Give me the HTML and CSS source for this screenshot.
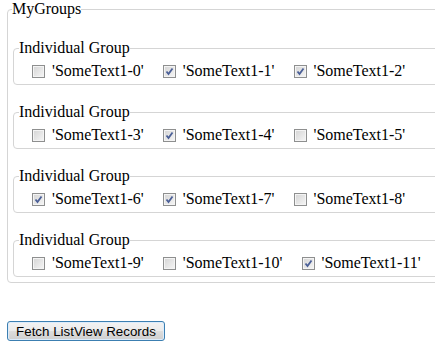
FILE: index.html
```html
<!DOCTYPE html>
<html lang="en">
<head>
    <meta charset="UTF-8">
    <meta name="viewport" content="width=device-width, initial-scale=1.0">
    <title>MyGroups</title>
    <link rel="stylesheet" href="styles.css">
</head>
<body>
<div class="page">
<fieldset class="groups">
    <legend>MyGroups</legend>

    <fieldset class="group">
        <legend>Individual Group</legend>
        <div class="row">
            <label class="item"><span class="box"></span>'SomeText1-0'</label>
            <label class="item"><span class="box checked"><svg viewBox="0 0 11 11"><path d="M2.5 5.5 L4.5 8 L8.5 2.5"/></svg></span>'SomeText1-1'</label>
            <label class="item"><span class="box checked"><svg viewBox="0 0 11 11"><path d="M2.5 5.5 L4.5 8 L8.5 2.5"/></svg></span>'SomeText1-2'</label>
        </div>
    </fieldset>

    <fieldset class="group">
        <legend>Individual Group</legend>
        <div class="row">
            <label class="item"><span class="box"></span>'SomeText1-3'</label>
            <label class="item"><span class="box checked"><svg viewBox="0 0 11 11"><path d="M2.5 5.5 L4.5 8 L8.5 2.5"/></svg></span>'SomeText1-4'</label>
            <label class="item"><span class="box"></span>'SomeText1-5'</label>
        </div>
    </fieldset>

    <fieldset class="group">
        <legend>Individual Group</legend>
        <div class="row">
            <label class="item"><span class="box checked"><svg viewBox="0 0 11 11"><path d="M2.5 5.5 L4.5 8 L8.5 2.5"/></svg></span>'SomeText1-6'</label>
            <label class="item"><span class="box checked"><svg viewBox="0 0 11 11"><path d="M2.5 5.5 L4.5 8 L8.5 2.5"/></svg></span>'SomeText1-7'</label>
            <label class="item"><span class="box"></span>'SomeText1-8'</label>
        </div>
    </fieldset>

    <fieldset class="group">
        <legend>Individual Group</legend>
        <div class="row">
            <label class="item"><span class="box"></span>'SomeText1-9'</label>
            <label class="item"><span class="box"></span>'SomeText1-10'</label>
            <label class="item"><span class="box checked"><svg viewBox="0 0 11 11"><path d="M2.5 5.5 L4.5 8 L8.5 2.5"/></svg></span>'SomeText1-11'</label>
        </div>
    </fieldset>
</fieldset>

<div class="actions">
    <button class="fetch-btn">Fetch ListView Records</button>
</div>
</div>
</body>
</html>
```

FILE: styles.css
```css
body {
    margin: 0;
    background-color: #ffffff;
    font-family: "Liberation Serif", "Times New Roman", serif;
    font-size: 16px;
    color: #000000;
}

.page {
    width: 435px;
    overflow: hidden;
}

fieldset {
    margin: 0;
    border: 1px solid #d5d5d5;
    border-radius: 4px;
}

legend {
    padding: 0;
    line-height: 18px;
}

.groups {
    width: 470px;
    margin-left: 7px;
    padding: 21px 0 5px 0;
}

.groups > legend {
    margin-left: 4px;
}

.group {
    margin: 0 0 18px 5px;
    padding: 0;
}

.group:last-child {
    margin-bottom: 0;
}

.group > legend {
    margin-left: 5px;
}

.row {
    display: flex;
    align-items: center;
    height: 20px;
    padding: 4px 0 3px 18px;
}

.item {
    display: flex;
    align-items: center;
    margin-right: 19px;
    white-space: nowrap;
}

.box {
    box-sizing: border-box;
    width: 13px;
    height: 13px;
    margin-right: 7px;
    border: 1px solid #8e8f8f;
    background: linear-gradient(135deg, #d4d4d4, #f6f6f6);
    box-shadow: inset 0 0 0 1px #f4f4f4;
}

.box svg {
    display: block;
    width: 11px;
    height: 11px;
}

.box svg path {
    fill: none;
    stroke: #4a5f97;
    stroke-width: 1.8;
}

.actions {
    margin-top: 38px;
    padding-left: 7px;
}

.fetch-btn {
    box-sizing: border-box;
    width: 158px;
    height: 20px;
    padding: 0;
    border: 1px solid #3c7fb1;
    border-radius: 3px;
    background: linear-gradient(#f2f2f2 0%, #ebebeb 50%, #dddddd 51%, #cfcfcf 100%);
    box-shadow: inset 0 0 0 1px #dcecfc;
    font-family: "Liberation Sans", Arial, sans-serif;
    font-size: 13.33px;
    color: #000000;
}
```
